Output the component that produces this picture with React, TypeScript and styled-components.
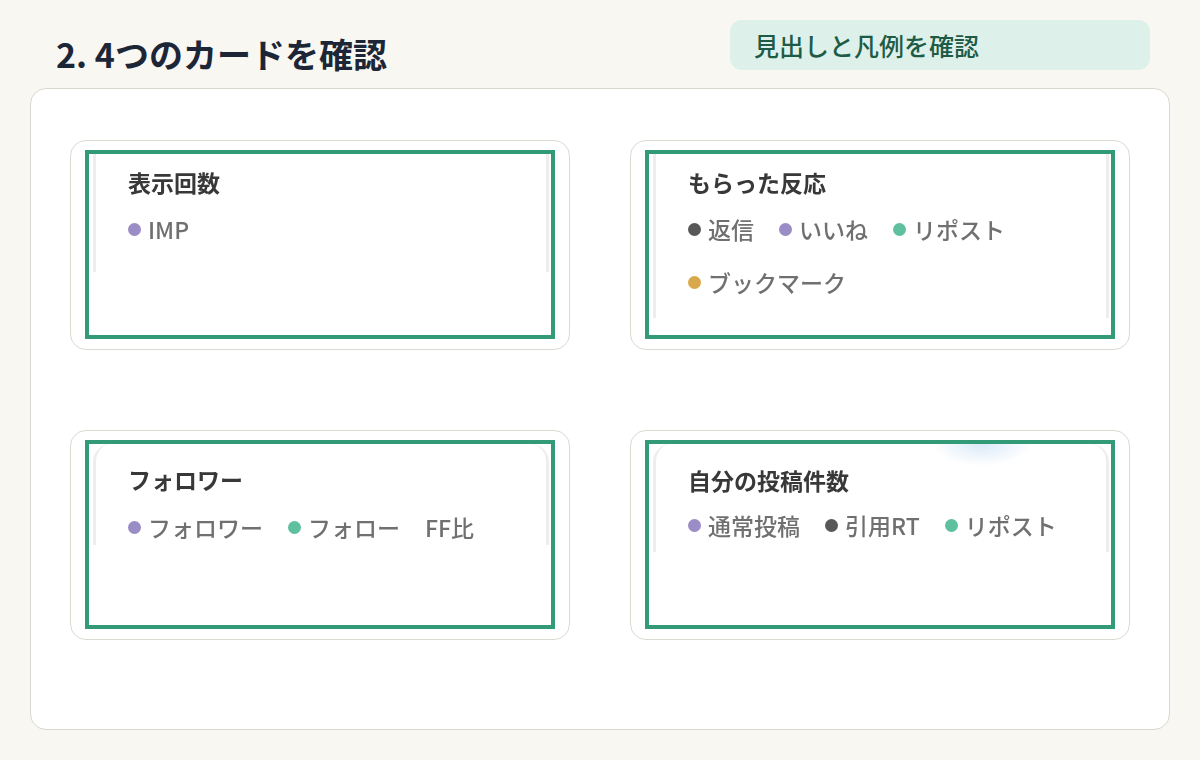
import React from 'react';
import styled, {createGlobalStyle} from 'styled-components';

const GlobalStyle = createGlobalStyle`
  html, body {
    margin: 0;
    padding: 0;
    background: #f8f7f2;
  }
  body {
    font-family: "Noto Sans CJK JP", "Noto Sans", sans-serif;
  }
`;

const Page = styled.div`
  width: 1200px;
  height: 760px;
  box-sizing: border-box;
  padding: 20px 30px 30px;
  display: flex;
  flex-direction: column;
`;

const Header = styled.header`
  height: 68px;
  display: flex;
  align-items: center;
`;

const Title = styled.h1`
  margin: 0 0 0 26px;
  font-size: 34px;
  font-weight: 700;
  line-height: 1.2;
  color: #1c2636;
`;

// 右上の緑バッジ
const Badge = styled.div`
  align-self: flex-start;
  margin-left: auto;
  margin-right: 20px;
  width: 420px;
  height: 50px;
  box-sizing: border-box;
  padding-left: 24px;
  display: flex;
  align-items: center;
  background: #ddf1ea;
  border-radius: 12px;
  font-size: 25px;
  font-weight: 500;
  color: #1e5b46;
`;

const Panel = styled.main`
  flex: 1;
  background: #fff;
  border: 1.5px solid #d9d7cf;
  border-radius: 16px;
  padding: 51px 39px 89px;
  display: grid;
  grid-template-columns: 500px 500px;
  grid-template-rows: 210px 210px;
  column-gap: 60px;
  row-gap: 80px;
`;

const Card = styled.section`
  box-sizing: border-box;
  background: #fff;
  border: 1.5px solid #dbd9d2;
  border-radius: 16px;
  padding: 9px 14px 10px;
  display: flex;
`;

// 確認用の緑枠
const Frame = styled.div`
  flex: 1;
  border: 4px solid #339a78;
  overflow: hidden;
`;

// 切り抜いたカード画像
const Shot = styled.div<{$h: number; $top: number; $round?: boolean; $glow?: boolean}>`
  height: ${p => p.$h}px;
  margin: 0 2px 0 4px;
  box-sizing: border-box;
  padding: ${p => p.$top}px 20px 0 32px;
  border-left: 3px solid #ededeb;
  border-right: 3px solid #ededeb;
  border-radius: ${p => (p.$round ? '18px 18px 0 0' : '0')};
  background: ${p =>
    p.$glow
      ? 'radial-gradient(ellipse 50px 22px at 326px 0px, rgba(205,226,246,0.75), rgba(255,255,255,0))'
      : '#fff'};
  filter: blur(0.3px);
`;

const CardTitle = styled.h2`
  margin: 0;
  font-size: 23px;
  font-weight: 700;
  line-height: 31px;
  color: #383838;
`;

const Legend = styled.ul<{$gap: number}>`
  list-style: none;
  margin: ${p => p.$gap}px 0 0;
  padding: 0;
  display: flex;
  flex-wrap: wrap;
  column-gap: 25px;
  row-gap: 21px;
`;

const Item = styled.li`
  display: flex;
  align-items: center;
  gap: 7px;
  font-size: 23px;
  font-weight: 500;
  line-height: 32px;
  color: #707070;
`;

const Dot = styled.span<{$color: string}>`
  width: 13px;
  height: 13px;
  border-radius: 50%;
  background: ${p => p.$color};
`;

const PURPLE = '#9a8cc4';
const DARK = '#585858';
const TEAL = '#5fc0a0';
const GOLD = '#d9a84a';

type Entry = {label: string; color?: string};

type CardData = {
  title: string;
  items: Entry[];
  h: number;
  top: number;
  gap: number;
  round?: boolean;
  glow?: boolean;
};

const cards: CardData[] = [
  {title: '表示回数', items: [{label: 'IMP', color: PURPLE}], h: 118, top: 13, gap: 15},
  {
    title: 'もらった反応',
    items: [
      {label: '返信', color: DARK},
      {label: 'いいね', color: PURPLE},
      {label: 'リポスト', color: TEAL},
      {label: 'ブックマーク', color: GOLD},
    ],
    h: 164,
    top: 13,
    gap: 15,
  },
  {
    title: 'フォロワー',
    items: [
      {label: 'フォロワー', color: PURPLE},
      {label: 'フォロー', color: TEAL},
      {label: 'FF比'},
    ],
    h: 101,
    top: 20,
    gap: 16,
    round: true,
  },
  {
    title: '自分の投稿件数',
    items: [
      {label: '通常投稿', color: PURPLE},
      {label: '引用RT', color: DARK},
      {label: 'リポスト', color: TEAL},
    ],
    h: 108,
    top: 21,
    gap: 13,
    round: true,
    glow: true,
  },
];

export default function App() {
  return (
    <>
      <GlobalStyle/>
      <Page>
        <Header>
          <Title>2. 4つのカードを確認</Title>
          <Badge>見出しと凡例を確認</Badge>
        </Header>
        <Panel>
          {cards.map(card =>
            <Card key={card.title}>
              <Frame>
                <Shot $h={card.h} $top={card.top} $round={card.round} $glow={card.glow}>
                  <CardTitle>{card.title}</CardTitle>
                  <Legend $gap={card.gap}>
                    {card.items.map(item =>
                      <Item key={item.label}>
                        {item.color && <Dot $color={item.color}/>}
                        {item.label}
                      </Item>
                    )}
                  </Legend>
                </Shot>
              </Frame>
            </Card>
          )}
        </Panel>
      </Page>
    </>
  );
}
